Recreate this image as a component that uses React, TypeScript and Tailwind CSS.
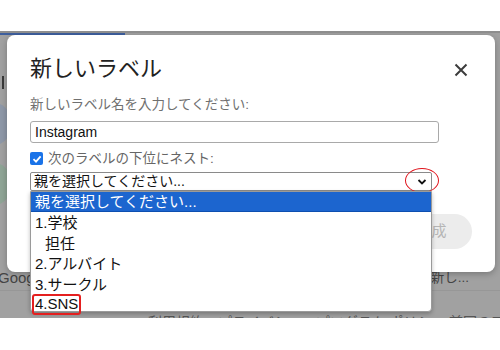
import React from 'react';

const jp = { fontFamily: '"Liberation Sans", "Noto Sans CJK JP", sans-serif' };

const options = [
  { label: '1.学校', indent: false },
  { label: '担任', indent: true },
  { label: '2.アルバイト', indent: false },
  { label: '3.サークル', indent: false },
];

const App = () => {
  return (
    <div className="w-[500px] h-[350px] flex flex-col bg-white overflow-hidden" style={jp}>
      {/* white strip above the overlay */}
      <div className="h-[31px] bg-white" />

      {/* dimmed page behind the dialog */}
      <div className="relative h-[287px] bg-[#a1a1a1] border-t-2 border-[#8e8e8e] overflow-hidden">
        <div className="absolute left-0 top-0 w-[125px] h-[2px] bg-[#3e5f9e]" />

        {/* faded page content */}
        <div className="absolute left-[2px] top-[43px] w-[2px] h-[13px] bg-[#3a3a3a]" />
        <div className="absolute left-[-22px] top-[70px] w-[32px] h-[42px] rounded-full bg-[#8e98a8]" />
        <div className="absolute left-[-22px] top-[130px] w-[32px] h-[42px] rounded-full bg-[#8fa596]" />
        <div className="absolute left-0 right-0 top-[234px] flex flex-col">
          <div className="h-[23px] flex justify-between items-center pr-[31px] text-[#444]">
            <span className="ml-[-2px] text-[15px]">Goog</span>
            <span className="text-[13.5px]">新し...</span>
          </div>
          <div className="h-px bg-[#979797]" />
          <div className="mt-[22px] pl-[148px] text-[14px] leading-[18px] text-[#555] whitespace-nowrap">
            利用規約・プライバシー・プログラム ポリシー 前回のアカウント アクティビティ
          </div>
        </div>

        {/* dialog */}
        <div className="absolute left-[7px] top-[2px] w-[488px] h-[237px] bg-white rounded-[8px] shadow-[0_2px_6px_rgba(0,0,0,0.25)] pl-[23px] pr-[23px] pt-[19px] flex flex-col">
          <div className="flex items-center justify-between pr-[4px] h-[30px]">
            <div className="text-[22px] leading-[30px] text-[#222]">新しいラベル</div>
            <svg width="14" height="14" viewBox="0 0 14 14" className="mt-[2px]">
              <path d="M1.5 1.5 L12.5 12.5 M12.5 1.5 L1.5 12.5" stroke="#3c3c3c" strokeWidth="2" />
            </svg>
          </div>

          <div className="mt-[11px] text-[13.5px] leading-[20px] text-[#707070]">新しいラベル名を入力してください:</div>

          <div className="mt-[6px] w-[409px] h-[22px] border border-[#a9a9a9] rounded-[3px] flex items-center pl-[4px] text-[14px] text-[#111]">
            Instagram
          </div>

          <div className="mt-[7px] flex items-center h-[17px] gap-[5px]">
            <div className="w-[13px] h-[13px] rounded-[2px] bg-[#1a73e8] flex items-center justify-center">
              <svg width="10" height="10" viewBox="0 0 10 10">
                <path d="M1.5 5.2 L4 7.6 L8.6 2.4" stroke="white" strokeWidth="1.8" fill="none" />
              </svg>
            </div>
            <span className="text-[13.5px] leading-[17px] text-[#666]">次のラベルの下位にネスト:</span>
          </div>

          <div className="relative mt-[5px] w-[402px] h-[19px] border border-[#8a8a8a] rounded-[2px] flex items-center justify-between pl-[3px] pr-[4px]">
            <span className="text-[14px] leading-[17px] text-[#111]">親を選択してください...</span>
            <svg width="10" height="8" viewBox="0 0 10 8">
              <path d="M1.5 2 L5 5.5 L8.5 2" stroke="#111" strokeWidth="1.8" fill="none" />
            </svg>

            {/* red circle around chevron */}
            <div className="absolute right-[-8px] top-[-5px] w-[34px] h-[25px] rounded-[50%] border-[1.5px] border-[#e0141c]" />

            {/* open option list */}
            <div className="absolute left-[-1px] top-[18px] w-[402px] h-[121px] bg-white border border-[#9a9a9a] rounded-b-[4px] shadow-[0_2px_4px_rgba(0,0,0,0.25)] z-10 flex flex-col">
              <div className="h-[20px] bg-[#1c65cf] border-b border-[#0d4fb0] text-white text-[15px] leading-[19px] pl-[4px]">
                親を選択してください...
              </div>
              {options.map((o) => (
                <div
                  key={o.label}
                  className={`h-[20.5px] text-[15px] leading-[21.5px] text-[#111] ${o.indent ? 'pl-[14px]' : 'pl-[4px]'}`}
                >
                  {o.label}
                </div>
              ))}
              <div className="flex items-start pl-[1px]">
                <span className="h-[21px] flex items-center border-[2.5px] border-[#e41f1f] rounded-[3px] px-[1px] text-[15px] text-[#111]">4.SNS</span>
              </div>
            </div>
          </div>

          {/* create button (disabled) */}
          <div className="mt-[23px] flex justify-end">
            <div className="w-[69px] h-[35px] rounded-full bg-[#ececec] flex items-center justify-center pr-[12px] text-[15px] text-[#b5b5b5]">
              作成
            </div>
          </div>
        </div>
      </div>

      <div className="flex-1 bg-white" />
    </div>
  );
};

export default App;
